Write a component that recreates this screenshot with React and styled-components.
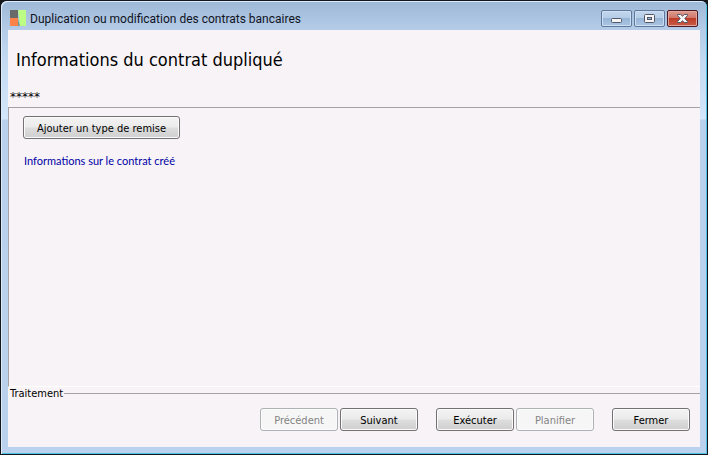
import React from 'react';
import styled, { createGlobalStyle } from 'styled-components';

const GlobalStyle = createGlobalStyle`
    * {
        box-sizing: border-box;
    }
    body {
        margin: 0;
        background: #14161c;
        color: #000;
        font-family: Tahoma, 'DejaVu Sans Condensed', 'DejaVu Sans', sans-serif;
        font-size: 11px;
        line-height: 14px;
    }
`

const Window = styled.main`
    display: flex;
    flex-direction: column;
    min-height: calc(100vh - 2px);
    margin: 1px;
    padding: 0 7px 7px;
    border-radius: 6px 6px 0 0;
    background: linear-gradient(#9db8d6 0, #b4cce8 29px, #c3daf2 60px, #d3e6fa 118px, #b9d1ed 119px, #bad2ee 100%);
    box-shadow: inset 1px 1px #dcebf9, inset -1px -1px #4cc3e4;
`

const TitleBar = styled.header`
    display: flex;
    align-items: center;
    gap: 4px;
    height: 29px;
    padding: 5px 2px 0 1px;
`

const WindowTitle = styled.h1`
    flex: 1;
    margin: 0;
    padding-top: 2px;
    color: #10131f;
    font-family: 'Segoe UI', Roboto, sans-serif;
    font-size: 12px;
    font-weight: 400;
    line-height: 16px;
`

const Controls = styled.div`
    display: flex;
    gap: 2px;
`

const ControlButton = styled.button`
    display: flex;
    align-items: center;
    justify-content: center;
    width: 31px;
    height: 17px;
    padding: 0;
    border: 1px solid ${props => props.$close ? '#4b1a25' : '#61789a'};
    border-radius: 2px;
    background: ${props => props.$close
        ? 'linear-gradient(#dc9c92 0, #d07768 45%, #bd3c27 50%, #c95c47 100%)'
        : 'linear-gradient(#c3d7ed 0, #b5cde8 45%, #98b5d6 50%, #abc6e4 100%)'};
    box-shadow: inset 0 0 0 1px ${props => props.$close ? '#e4a79c' : '#cbdff4'};
`

const Client = styled.section`
    display: flex;
    flex: 1;
    flex-direction: column;
    background: #f7f3f7;
`

const Heading = styled.h2`
    margin: 0;
    padding: 18px 8px 0;
    font-size: 18px;
    font-weight: 400;
    line-height: 24px;
`

const Stars = styled.p`
    margin: 0;
    padding: 18px 2px 3px;
    font-family: 'DejaVu Sans', sans-serif;
    font-size: 12px;
`

const Panel = styled.div`
    display: flex;
    flex: 1;
    flex-direction: column;
    align-items: flex-start;
    gap: 15px;
    padding: 8px 14px;
    border-top: 1px solid #a5a2a5;
    border-left: 1px solid #a5a2a5;
    border-bottom: 1px solid #fff;
`

const Info = styled.p`
    margin: 0;
    padding: 0 1px;
    color: #0000a5;
    font-family: Tahoma, Lato, sans-serif;
`

const Processing = styled.fieldset`
    display: flex;
    justify-content: flex-end;
    gap: 18px;
    min-width: 0;
    margin: 0;
    padding: 9px 10px 16px;
    border: 0;
    border-top: 1px solid #a5a2a5;
`

const Legend = styled.legend`
    margin-left: -10px;
    padding: 2px 1px 0 2px;
    line-height: 10px;
`

const Group = styled.div`
    display: flex;
    gap: 2px;
`

const PushButton = styled.button`
    min-width: ${props => props.$wide ? '157px' : '78px'};
    height: 23px;
    padding: 2px 8px 0;
    border: 1px solid #737173;
    border-radius: 3px;
    background: linear-gradient(#f3f3f3 0, #ebebeb 48%, #dddddd 52%, #cfcfcf 100%);
    box-shadow: inset 0 0 0 1px #fbfbfb;
    color: #000;
    font: inherit;

    &:disabled {
        border-color: #adb2b5;
        background: #f6f6f6;
        color: #848484;
    }
`

function AppLogo() {
    return (
        <svg width="17" height="17" viewBox="0 0 17 17" aria-hidden="true">
            <path fill="#686b68" d="M1 0h8v8H1z" />
            <path fill="#ff8249" d="M1 8h8v8H1z" />
            <path fill="#bdff84" d="M9 0h8v16h-6z" />
            <path fill="#6f9c8c" d="M9 9l2 7H9z" />
        </svg>
    )
}

function MinimizeIcon() {
    return (
        <svg width="11" height="9" viewBox="0 0 11 9" aria-hidden="true">
            <rect x=".5" y="4.5" width="10" height="4" rx="1" fill="#f5f5f5" stroke="#535666" />
        </svg>
    )
}

function MaximizeIcon() {
    return (
        <svg width="11" height="9" viewBox="0 0 11 9" aria-hidden="true">
            <rect x=".5" y=".5" width="10" height="8" rx="1" fill="#f5f5f5" stroke="#535666" />
            <rect x="3.5" y="3.5" width="4" height="2" fill="#9db8d8" stroke="#535666" />
        </svg>
    )
}

function CloseIcon() {
    return (
        <svg width="11" height="9" viewBox="0 0 11 9" aria-hidden="true">
            <path
                d="M.5.5h3.2l1.8 1.7L7.3.5h3.2v.9L7.8 4.5l2.7 3.1v.9H7.3L5.5 6.8 3.7 8.5H.5v-.9l2.7-3.1L.5 1.4z"
                fill="#f8f8f8"
                stroke="#535666"
            />
        </svg>
    )
}

function App() {
    return (
        <>
            <GlobalStyle />
            <Window>
                <TitleBar>
                    <AppLogo />
                    <WindowTitle>Duplication ou modification des contrats bancaires</WindowTitle>
                    <Controls>
                        <ControlButton type="button" aria-label="Réduire"><MinimizeIcon /></ControlButton>
                        <ControlButton type="button" aria-label="Agrandir"><MaximizeIcon /></ControlButton>
                        <ControlButton type="button" aria-label="Quitter" $close><CloseIcon /></ControlButton>
                    </Controls>
                </TitleBar>
                <Client>
                    <Heading>Informations du contrat dupliqué</Heading>
                    <Stars>*****</Stars>
                    <Panel>
                        <PushButton type="button" $wide>Ajouter un type de remise</PushButton>
                        <Info>Informations sur le contrat créé</Info>
                    </Panel>
                    <Processing>
                        <Legend>Traitement</Legend>
                        <Group>
                            <PushButton type="button" disabled>Précédent</PushButton>
                            <PushButton type="button">Suivant</PushButton>
                        </Group>
                        <Group>
                            <PushButton type="button">Exécuter</PushButton>
                            <PushButton type="button" disabled>Planifier</PushButton>
                        </Group>
                        <PushButton type="button">Fermer</PushButton>
                    </Processing>
                </Client>
            </Window>
        </>
    )
}

export default App
